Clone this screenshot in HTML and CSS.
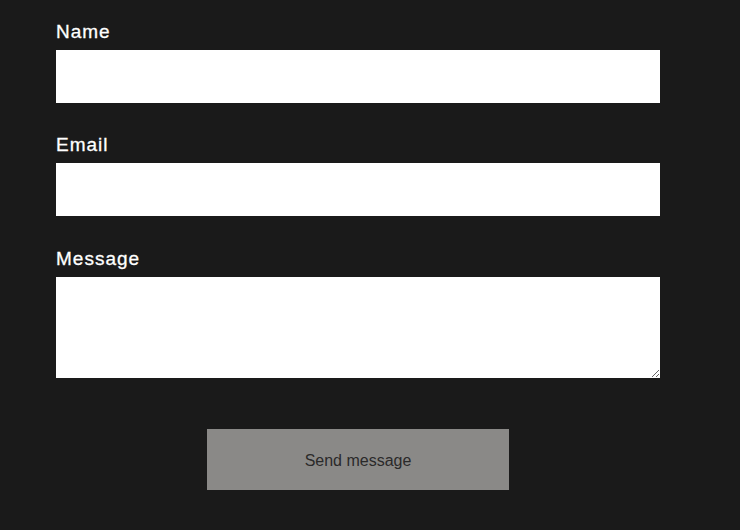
FILE: index.html
```html
<!DOCTYPE html>
<html>
<head>
<meta charset="utf-8">
<link rel="stylesheet" href="styles.css">
</head>
<body>
<form class="contact">
  <div class="field">
    <label class="label" for="name">Name</label>
    <input class="input" id="name" type="text">
  </div>
  <div class="field field-wide">
    <label class="label" for="email">Email</label>
    <input class="input" id="email" type="email">
  </div>
  <div class="field">
    <label class="label" for="message">Message</label>
    <textarea class="textarea" id="message"></textarea>
  </div>
  <div class="actions">
    <button class="send" type="button">Send message</button>
  </div>
</form>
</body>
</html>
```
FILE: styles.css
```css
html, body {
  margin: 0;
  padding: 0;
  background: #1a1a1a;
}
body {
  font-family: "Liberation Sans", Arial, sans-serif;
  height: 530px;
  overflow: hidden;
}
.contact {
  width: 604px;
  margin-left: 56px;
  padding-top: 21px;
  display: flex;
  flex-direction: column;
}
.field {
  display: flex;
  flex-direction: column;
  margin-bottom: 31px;
}
.field-wide {
  margin-bottom: 32px;
}
.label {
  color: #ffffff;
  font-size: 19px;
  line-height: 22px;
  letter-spacing: 1px;
  margin-bottom: 7px;
  font-weight: normal;
  -webkit-text-stroke: 0.3px #ffffff;
}
.input, .textarea {
  display: block;
  box-sizing: border-box;
  width: 604px;
  border: none;
  background: #ffffff;
  margin: 0;
  padding: 0 10px;
  font-family: inherit;
  font-size: 16px;
  outline: none;
}
.input {
  height: 53px;
}
.textarea {
  height: 101px;
  resize: vertical;
}
.actions {
  display: flex;
  justify-content: center;
  margin-top: 20px;
}
.send {
  width: 302px;
  height: 61px;
  background: #8a8987;
  border: none;
  color: #2a2a2a;
  font-family: inherit;
  font-size: 16px;
  padding: 3px 0 0 0;
  margin: 0;
}
```
